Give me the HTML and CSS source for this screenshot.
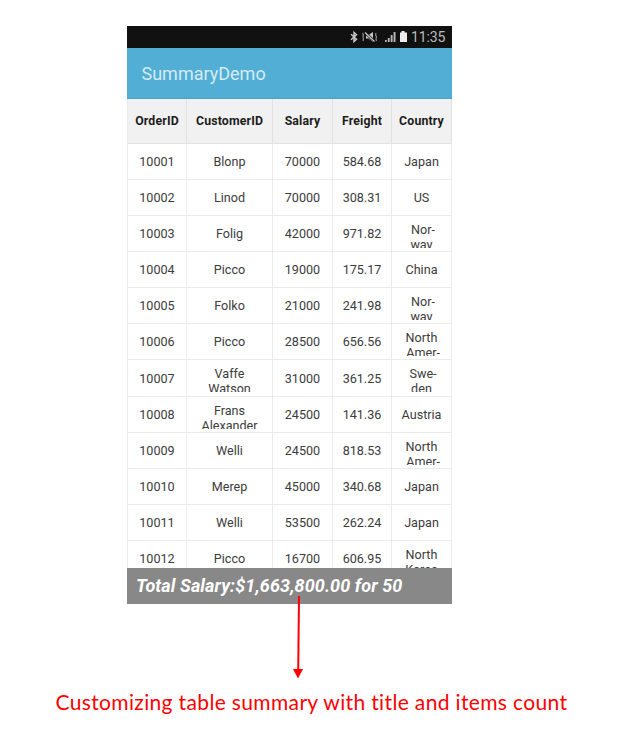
FILE: index.html
```html
<!DOCTYPE html>
<html lang="en">
<head>
<meta charset="utf-8">
<title>SummaryDemo</title>
<link rel="stylesheet" href="styles.css">
</head>
<body>
<main class="phone">
  <div class="status">
    <svg class="status-icons" width="70" height="22" viewBox="0 0 70 22" aria-hidden="true">
      <path d="M1 8.200 6.500 13.200 4 15.600V6.400L6.500 8.800 1 13.800" fill="none" stroke="#c6c6c6" stroke-width="1.500"/>
      <path d="M16 9h2.500L23 6v10l-4.500-3.500H16z" fill="#c6c6c6"/>
      <path d="M15 6.500 24.500 15.500" fill="none" stroke="#111" stroke-width="2.600"/>
      <path d="M15 6.500 24.500 15.500" fill="none" stroke="#c6c6c6" stroke-width="1.300"/>
      <path d="M12.500 7q1.500 1.500 0.500 4 1 2 0 4M26 7q-1 1.500.5 4-1 2 0 4" fill="none" stroke="#8c8c8c" stroke-width="1.200"/>
      <path d="M35 14h1.700v2H35zM37.800 12h1.900v4h-1.900zM40.700 9h1.900v7h-1.900zM43.600 6h1.900v10h-1.900z" fill="#b8b8b8"/>
      <path d="M51.500 5h3v1.500H57V16h-7V6.500h1.500z" fill="#ececec"/>
    </svg>
    <span class="clock">11:35</span>
  </div>
  <header class="appbar">SummaryDemo</header>
  <div class="grid head">
    <div>OrderID</div><div>CustomerID</div><div>Salary</div><div>Freight</div><div>Country</div>
  </div>
  <div class="rows">
    <div class="grid row"><div>10001</div><div>Blonp</div><div>70000</div><div>584.68</div><div>Japan</div></div>
    <div class="grid row"><div>10002</div><div>Linod</div><div>70000</div><div>308.31</div><div>US</div></div>
    <div class="grid row"><div>10003</div><div>Folig</div><div>42000</div><div>971.82</div><div class="wrap"><p>&nbsp;Nor-<br>way</p></div></div>
    <div class="grid row"><div>10004</div><div>Picco</div><div>19000</div><div>175.17</div><div>China</div></div>
    <div class="grid row"><div>10005</div><div>Folko</div><div>21000</div><div>241.98</div><div class="wrap"><p>&nbsp;Nor-<br>way</p></div></div>
    <div class="grid row"><div>10006</div><div>Picco</div><div>28500</div><div>656.56</div><div class="wrap"><p>North<br>&nbsp;Amer-</p></div></div>
    <div class="grid row"><div>10007</div><div class="wrap"><p>Vaffe<br>Watson</p></div><div>31000</div><div>361.25</div><div class="wrap"><p>&nbsp;Swe-<br>den</p></div></div>
    <div class="grid row"><div>10008</div><div class="wrap"><p>Frans<br>Alexander</p></div><div>24500</div><div>141.36</div><div>Austria</div></div>
    <div class="grid row"><div>10009</div><div>Welli</div><div>24500</div><div>818.53</div><div class="wrap"><p>North<br>&nbsp;Amer-</p></div></div>
    <div class="grid row"><div>10010</div><div>Merep</div><div>45000</div><div>340.68</div><div>Japan</div></div>
    <div class="grid row"><div>10011</div><div>Welli</div><div>53500</div><div>262.24</div><div>Japan</div></div>
    <div class="grid row"><div>10012</div><div>Picco</div><div>16700</div><div>606.95</div><div class="wrap"><p>North<br>Korea</p></div></div>
  </div>
  <footer class="summary">Total Salary:$1,663,800.00 for 50</footer>
</main>
<svg class="arrow" width="12" height="84" viewBox="0 0 12 84" aria-hidden="true">
  <path d="M7 0 6.200 75" stroke="#f00" stroke-width="2"/>
  <path d="M1 73h10L6 82.500z" fill="#f00"/>
</svg>
<p class="caption">Customizing table summary with title and items count</p>
</body>
</html>
```
FILE: styles.css
```css
* { box-sizing: border-box; }
body {
  margin: 0;
  height: 730px;
  padding-top: 26px;
  overflow: hidden;
  position: relative;
  background: #fff;
  font-family: Roboto, sans-serif;
}
p { margin: 0; }
.phone { width: 325px; margin-left: 127px; }
.status {
  height: 22px;
  background: #111;
  display: flex;
  align-items: center;
  justify-content: flex-end;
  padding-right: 6px;
}
.status-icons { margin-right: -9px; flex: none; }
.clock {
  width: 35px;
  color: #bcbcbc;
  font-size: 14px;
  letter-spacing: -0.15px;
  line-height: 22px;
  white-space: nowrap;
}
.appbar {
  height: 51px;
  background: #52aed5;
  border-bottom: 1px solid #4ba3c8;
  color: #d5ebf4;
  font-size: 18px;
  line-height: 51px;
  padding-left: 14.5px;
}
.grid {
  display: grid;
  grid-template-columns: 60px 86px 60px 59px 60px;
  text-align: center;
  color: #3c3c3c;
  font-size: 12.6px;
}
.grid > div {
  border-right: 1px solid #ebebeb;
  border-bottom: 1px solid #ebebeb;
  display: flex;
  align-items: center;
  justify-content: center;
}
.grid > div:first-child { border-left: 1px solid #ebebeb; }
.head {
  height: 45px;
  background: #f1f1f1;
  color: #1d1d1d;
  font-weight: 700;
  font-size: 12.3px;
  letter-spacing: 0.15px;
}
.head > div { border-color: #e2e2e2; }
.rows { height: 424px; overflow: hidden; }
.row { height: 36.09px; }
.grid > .wrap { align-items: flex-start; padding-top: 6px; }
.wrap p { height: 26px; overflow: hidden; line-height: 15px; }
.summary {
  height: 36px;
  background: #888;
  color: #fff;
  font-size: 18px;
  font-weight: 700;
  font-style: italic;
  line-height: 35px;
  letter-spacing: 0.1px;
  padding-left: 9px;
  white-space: nowrap;
}
.arrow { position: absolute; left: 292px; top: 596px; }
.caption {
  margin: 85px 0 0 55.5px;
  color: #f00;
  font: 21px/26px Lato, sans-serif;
  font-variant-ligatures: none;
  letter-spacing: 0.35px;
  white-space: nowrap;
}
```
